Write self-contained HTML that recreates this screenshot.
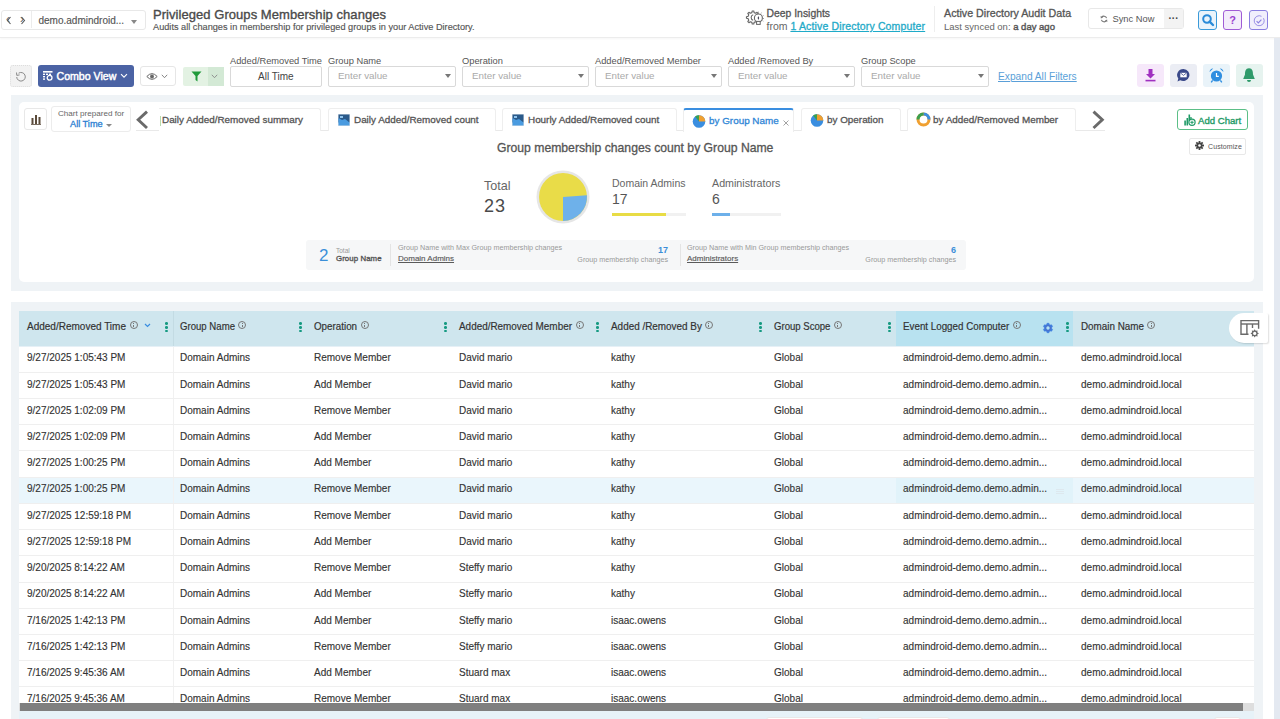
<!DOCTYPE html>
<html><head><meta charset="utf-8">
<style>
*{box-sizing:border-box;margin:0;padding:0}
html,body{width:1280px;height:719px;overflow:hidden;background:#fff;font-family:"Liberation Sans",sans-serif;color:#333}
.a{position:absolute;white-space:nowrap}
.hdr{position:absolute;left:0;top:0;width:1280px;height:38px;background:#fff;border-bottom:1px solid #ececec;box-shadow:0 1px 2px rgba(0,0,0,0.04)}
.strip{position:absolute;left:1274px;top:38px;width:7px;height:681px;background:#e4e9f1}
.panel{position:absolute;background:#eff3f6}
.card{position:absolute;background:#fff;border-radius:5px}
.inp{position:absolute;top:65.5px;height:21px;border:1px solid #d9d9d9;border-radius:2px;background:#fff}
.lbl{position:absolute;top:54.5px;font-size:9.3px;color:#555;line-height:12px}
.ph{position:absolute;left:9px;top:2px;font-size:9.8px;color:#aaa;line-height:13px}
.tri{position:absolute;right:4px;top:7.5px;width:0;height:0;border-left:3px solid transparent;border-right:3px solid transparent;border-top:4.5px solid #777}
.tab{position:absolute;top:108px;height:23px;border:1px solid #eeeeee;border-bottom:none;border-radius:3px 3px 0 0;background:#fff}
.tabt{position:absolute;top:5px;font-size:9.9px;color:#555;line-height:12px;font-weight:400;-webkit-text-stroke:0.3px currentColor}
.th{position:absolute;top:311px;height:34.5px;background:#cfe6ee}
.row{position:absolute;left:19px;width:1235px;height:26.23px;border-bottom:1px solid #efefef;background:#fff}
.c{position:absolute;top:4.8px;font-size:11.5px;color:#333;line-height:12px;-webkit-text-stroke:0.15px currentColor;transform:scaleX(.87);transform-origin:0 0}
.ht{position:absolute;top:320px;font-size:11.5px;color:#333;line-height:12px;-webkit-text-stroke:0.2px currentColor;transform:scaleX(.87);transform-origin:0 0}
.keb{position:absolute;top:322px;width:3px;height:11px}
.keb i{position:absolute;left:-0.3px;width:2.8px;height:2.6px;border-radius:50%;background:#169a82}
.info{position:absolute;top:321px;width:8px;height:8px;border:0.8px solid #777;border-radius:50%}
.info:after{content:"";position:absolute;left:2.6px;top:2.6px;width:1px;height:2.6px;background:#777}
.info:before{content:"";position:absolute;left:2.6px;top:1.1px;width:1px;height:1px;background:#777}
</style></head><body>

<!-- HEADER -->
<div class="hdr"></div>
<div class="a" style="left:1px;top:10px;width:144.5px;height:20px;border:1px solid #e8e8e8;border-radius:3px"></div>
<div class="a" style="left:31px;top:11px;width:1px;height:17px;background:#ececec"></div>
<div class="a" style="left:6px;top:9px;font-size:12px;color:#666;line-height:20px">&#8249;</div>
<div class="a" style="left:20px;top:9px;font-size:12px;color:#666;line-height:20px">&#8250;</div>
<div class="a" style="left:38.5px;top:14px;font-size:10px;color:#555;line-height:13px;-webkit-text-stroke:0.15px #555">demo.admindroid...</div>
<div class="a" style="left:131px;top:19.5px;width:0;height:0;border-left:3.5px solid transparent;border-right:3.5px solid transparent;border-top:4px solid #888"></div>

<div class="a" style="left:153px;top:7px;font-size:13px;color:#4a4a4a;line-height:16px;-webkit-text-stroke:0.35px #4a4a4a;letter-spacing:0.05px">Privileged Groups Membership changes</div>
<div class="a" style="left:153px;top:21.5px;font-size:9.2px;color:#555;line-height:11px;-webkit-text-stroke:0.15px #555">Audits all changes in membership for privileged groups in your Active Directory.</div>

<div class="a" style="left:766.5px;top:7px;font-size:10.4px;color:#555;line-height:13px;-webkit-text-stroke:0.3px #555">Deep Insights</div>
<div class="a" style="left:766.5px;top:20px;font-size:10.5px;color:#666;line-height:13px">from <span style="color:#1eaac8;text-decoration:underline;-webkit-text-stroke:0.3px #1eaac8;letter-spacing:0.15px">1 Active Directory Computer</span></div>
<div class="a" style="left:934px;top:6px;width:1px;height:26px;background:#eee"></div>
<div class="a" style="left:944px;top:7px;font-size:10.7px;color:#555;line-height:13px;-webkit-text-stroke:0.3px #555">Active Directory Audit Data</div>
<div class="a" style="left:944px;top:20px;font-size:9.5px;color:#666;line-height:13px">Last synced on: <span style="color:#555;-webkit-text-stroke:0.4px #555">a day ago</span></div>

<div class="a" style="left:1088px;top:8px;width:96px;height:21px;border:1px solid #e8e8e8;border-radius:3px;background:#fff"></div>
<div class="a" style="left:1164px;top:9px;width:19px;height:19px;background:#f3f3f3"></div>
<div class="a" style="left:1112.5px;top:12.5px;font-size:9.3px;color:#555;line-height:13px">Sync Now</div>
<div class="a" style="left:1168.5px;top:12px;font-size:10px;color:#444;line-height:13px;font-weight:700">&middot;&middot;&middot;</div>

<div class="a" style="left:1198px;top:10px;width:19px;height:20px;border:1px solid #3a9ad9;border-radius:3px;background:#eaf4fb"></div>
<div class="a" style="left:1223px;top:10px;width:19px;height:20px;border:1px solid #a05cd6;border-radius:3px;background:#f3ecfb"></div>
<div class="a" style="left:1249px;top:10px;width:19px;height:20px;border:1px solid #8a7fe0;border-radius:3px;background:#f1effc"></div>

<div class="strip"></div>

<!-- TOOLBAR -->
<div class="a" style="left:10px;top:65px;width:22px;height:22px;border:1px dotted #ddd;border-radius:3px;background:#f2f2f2"></div>
<div class="a" style="left:37.7px;top:65px;width:96.3px;height:21.5px;border-radius:3px;background:#4b63a4"></div>
<div class="a" style="left:56.5px;top:69.5px;font-size:10.6px;color:#fff;line-height:13px;-webkit-text-stroke:0.45px #fff">Combo View</div>
<div class="a" style="left:140px;top:66px;width:36px;height:20px;border:1px solid #e6e6e6;border-radius:3px"></div>
<div class="a" style="left:183px;top:67px;width:41px;height:19px;border-radius:2px;background:#e3f2e3"></div>
<div class="a" style="left:208px;top:67px;width:16px;height:19px;background:#d3e9d5"></div>

<div class="lbl" style="left:230px">Added/Removed Time</div>
<div class="inp" style="left:230px;width:92px"><div class="ph" style="left:27px;top:3.5px;color:#444;font-size:10px">All Time</div></div>
<div class="lbl" style="left:328px">Group Name</div>
<div class="inp" style="left:328px;width:128px"><div class="ph">Enter value</div><div class="tri"></div></div>
<div class="lbl" style="left:462px">Operation</div>
<div class="inp" style="left:462px;width:127px"><div class="ph">Enter value</div><div class="tri"></div></div>
<div class="lbl" style="left:595px">Added/Removed Member</div>
<div class="inp" style="left:595px;width:127px"><div class="ph">Enter value</div><div class="tri"></div></div>
<div class="lbl" style="left:728px">Added /Removed By</div>
<div class="inp" style="left:728px;width:127px"><div class="ph">Enter value</div><div class="tri"></div></div>
<div class="lbl" style="left:861px">Group Scope</div>
<div class="inp" style="left:861px;width:128px"><div class="ph">Enter value</div><div class="tri"></div></div>
<div class="a" style="left:998px;top:70px;font-size:10.2px;color:#5a9fd8;line-height:13px;text-decoration:underline">Expand All Filters</div>

<div class="a" style="left:1137px;top:64px;width:27px;height:23px;border-radius:3px;background:#f6e8fa"></div>
<div class="a" style="left:1170px;top:64px;width:27px;height:23px;border-radius:3px;background:#ebedf4"></div>
<div class="a" style="left:1203px;top:64px;width:27px;height:23px;border-radius:3px;background:#e9f3f9"></div>
<div class="a" style="left:1236px;top:64px;width:27px;height:23px;border-radius:3px;background:#e6f3ef"></div>


<!-- HEADER ICONS -->
<svg class="a" style="left:744px;top:8px" width="22" height="18" viewBox="0 0 22 18"><path d="M13.88 8.41 L15.55 8.71 L15.55 10.29 L13.88 10.59 L13.22 12.18 L14.19 13.57 L13.07 14.69 L11.68 13.72 L10.09 14.38 L9.79 16.05 L8.21 16.05 L7.91 14.38 L6.32 13.72 L4.93 14.69 L3.81 13.57 L4.78 12.18 L4.12 10.59 L2.45 10.29 L2.45 8.71 L4.12 8.41 L4.78 6.82 L3.81 5.43 L4.93 4.31 L6.32 5.28 L7.91 4.62 L8.21 2.95 L9.79 2.95 L10.09 4.62 L11.68 5.28 L13.07 4.31 L14.19 5.43 L13.22 6.82Z" fill="#fff" stroke="#666" stroke-width="1.1" stroke-linejoin="round"/><path d="M9.2 6.8 A2.8 2.8 0 0 0 9.2 12.2" fill="none" stroke="#666" stroke-width="1.1"/><circle cx="14.4" cy="10" r="4" fill="#fff" stroke="#666" stroke-width="1.1"/><rect x="12.6" y="13.4" width="3.6" height="3" fill="#fff" stroke="#666" stroke-width="1"/><path d="M14.4 8 L15.2 10 L14.4 12 L13.6 10Z" fill="#445"/><g stroke="#888" stroke-width="0.8"><line x1="14.4" y1="3.6" x2="14.4" y2="4.8"/><line x1="17.5" y1="4.6" x2="17" y2="5.5"/><line x1="19.6" y1="7.5" x2="18.6" y2="8"/><line x1="20" y1="10.5" x2="19" y2="10.5"/><line x1="19.4" y1="13.2" x2="18.5" y2="12.6"/></g></svg>
<svg class="a" style="left:1100px;top:14.5px" width="8" height="8" viewBox="0 0 8 8"><g fill="none" stroke="#777" stroke-width="1.1"><path d="M6.6 3.2 A2.8 2.8 0 0 0 1.6 2.4"/><path d="M1.4 4.8 A2.8 2.8 0 0 0 6.4 5.6"/></g><path d="M0.6 0.9 L0.9 3.4 L3 2.6Z" fill="#777"/><path d="M7.4 7.1 L7.1 4.6 L5 5.4Z" fill="#777"/></svg>
<svg class="a" style="left:1201px;top:13px" width="14" height="14" viewBox="0 0 14 14"><circle cx="6" cy="6" r="3.8" fill="none" stroke="#2a8bd8" stroke-width="2"/><path d="M8.6 8.6 L12 12" stroke="#2a8bd8" stroke-width="2.4" stroke-linecap="round"/></svg>
<div class="a" style="left:1223px;top:11.5px;width:19px;text-align:center;font-size:11px;font-weight:700;color:#9a3fd0;line-height:17px">?</div>
<svg class="a" style="left:1251.5px;top:13.5px" width="14" height="14" viewBox="0 0 14 14"><path d="M11.5 4.2 A5 5 0 1 1 9.5 2.3" fill="none" stroke="#9a90e6" stroke-width="1"/><path d="M4.6 7.2 L6.3 8.9 L9.4 5.6" fill="none" stroke="#8a7fe0" stroke-width="1.1"/></svg>
<svg class="a" style="left:5.5px;top:15.5px" width="6" height="9" viewBox="0 0 6 9"><path d="M4.5 1 L1.5 4.5 L4.5 8" fill="none" stroke="#555" stroke-width="1.1"/></svg>
<svg class="a" style="left:20px;top:15.5px" width="6" height="9" viewBox="0 0 6 9"><path d="M1.5 1 L4.5 4.5 L1.5 8" fill="none" stroke="#555" stroke-width="1.1"/></svg>
<!-- TOOLBAR ICONS -->
<svg class="a" style="left:15px;top:70.5px" width="12" height="12" viewBox="0 0 12 12"><path d="M3.6 2.2 A4.3 4.3 0 1 1 1.7 6" fill="none" stroke="#8a8a8a" stroke-width="1"/><path d="M1.5 1.5 L1.8 4.4 L4.6 3.9" fill="none" stroke="#8a8a8a" stroke-width="1"/></svg>
<svg class="a" style="left:43px;top:70.5px" width="10" height="10" viewBox="0 0 10 10"><g fill="#fff"><rect x="0" y="0" width="9.5" height="1.6"/><rect x="0" y="2.6" width="2" height="1.4"/><rect x="3" y="2.6" width="2" height="1.4"/><rect x="6" y="2.6" width="2" height="1.4"/><rect x="0" y="5" width="2" height="1.4"/><rect x="0" y="7.4" width="2" height="1.4"/></g><circle cx="6.6" cy="6.8" r="2.4" fill="none" stroke="#fff" stroke-width="1.3"/></svg>
<svg class="a" style="left:120px;top:73px" width="8" height="6" viewBox="0 0 8 6"><path d="M1 1.2 L4 4.2 L7 1.2" fill="none" stroke="#fff" stroke-width="1.1"/></svg>
<svg class="a" style="left:146px;top:71.5px" width="12" height="9" viewBox="0 0 12 9"><path d="M0.8 4.5 Q6 -1.2 11.2 4.5 Q6 10.2 0.8 4.5Z" fill="none" stroke="#666" stroke-width="1"/><circle cx="6" cy="4.5" r="1.9" fill="#666"/></svg>
<svg class="a" style="left:161px;top:74px" width="7" height="5" viewBox="0 0 7 5"><path d="M0.8 0.8 L3.5 3.7 L6.2 0.8" fill="none" stroke="#777" stroke-width="0.9"/></svg>
<svg class="a" style="left:191px;top:71px" width="11" height="11" viewBox="0 0 11 11"><path d="M0.5 0.5 H10.5 L6.5 5 V10.5 L4.5 9 V5Z" fill="#1f9a3a"/></svg>
<svg class="a" style="left:211px;top:74px" width="7" height="5" viewBox="0 0 7 5"><path d="M0.8 0.8 L3.5 3.7 L6.2 0.8" fill="none" stroke="#888" stroke-width="0.9"/></svg>
<svg class="a" style="left:1144px;top:68px" width="13" height="14" viewBox="0 0 13 14"><path d="M4.5 1 H8.5 V6 H11 L6.5 10.5 L2 6 H4.5Z" fill="#a030c0"/><rect x="1.5" y="11.8" width="10" height="1.6" fill="#a030c0"/></svg>
<svg class="a" style="left:1176px;top:68px" width="15" height="15" viewBox="0 0 15 15"><path d="M7.5 1 A6.3 6 0 1 1 4.2 12.3 L1.5 13.5 L2.3 10.5 A6.3 6 0 0 1 7.5 1Z" fill="#3b4a8a"/><rect x="4.3" y="4.8" width="6.4" height="4.5" fill="#fff"/><path d="M4.3 4.8 L7.5 7.4 L10.7 4.8" fill="none" stroke="#3b4a8a" stroke-width="0.8"/></svg>
<svg class="a" style="left:1209px;top:68px" width="15" height="15" viewBox="0 0 15 15"><circle cx="7.5" cy="8" r="5.6" fill="#2f8ee0"/><path d="M7.5 5 V8.3 H9.8" fill="none" stroke="#fff" stroke-width="1.2"/><path d="M0.6 4 A3.2 3.2 0 0 1 4.2 0.6Z M14.4 4 A3.2 3.2 0 0 0 10.8 0.6Z" fill="#2f8ee0"/><path d="M3.6 12.3 L2.2 14.3 M11.4 12.3 L12.8 14.3" stroke="#2f8ee0" stroke-width="1.4"/></svg>
<svg class="a" style="left:1242px;top:67px" width="14" height="16" viewBox="0 0 14 16"><path d="M7 1.2 C10.5 1.2 11 4.5 11 7.5 L12.8 12 H1.2 L3 7.5 C3 4.5 3.5 1.2 7 1.2Z" fill="#2e9a6a"/><path d="M5 13 A2 2 0 0 0 9 13Z" fill="#2e9a6a"/></svg>

<!-- CHART PANEL -->
<div class="panel" style="left:11px;top:95px;width:1252px;height:196px"></div>
<div class="card" style="left:19px;top:102px;width:1235px;height:180px"></div>

<div class="a" style="left:24px;top:108px;width:23px;height:22px;border:1px solid #e8e8e8;border-radius:3px"></div>
<div class="a" style="left:51px;top:106px;width:80px;height:26px;border:1px solid #ececec;border-radius:3px"></div>
<div class="a" style="left:58px;top:109px;font-size:8.1px;color:#666;line-height:10px">Chart prepared for</div>
<div class="a" style="left:70px;top:118px;font-size:9.2px;color:#2a80d2;line-height:12px;-webkit-text-stroke:0.3px #2a80d2">All Time</div>

<div class="a" style="left:136px;top:130px;width:969px;height:1px;background:#e9e9e9"></div>
<div class="tab" style="left:159px;width:162px;border-left:none;border-radius:0 3px 0 0"><div class="tabt" style="left:3px">Daily Added/Removed summary</div></div>
<div class="tab" style="left:328px;width:168px"><div class="tabt" style="left:25px">Daily Added/Removed count</div></div>
<div class="tab" style="left:502px;width:175px"><div class="tabt" style="left:25px">Hourly Added/Removed count</div></div>
<div class="tab" style="left:683px;width:111px;height:24px;border-top:2px solid #3a8ee0"><div class="tabt" style="left:25px;top:5px;color:#2f86d6">by Group Name</div></div>
<div class="tab" style="left:801px;width:100px"><div class="tabt" style="left:25px">by Operation</div></div>
<div class="tab" style="left:907px;width:169px"><div class="tabt" style="left:25px">by Added/Removed Member</div></div>

<div class="a" style="left:1177px;top:109px;width:71px;height:21px;border:1px solid #5cbf87;border-radius:3px"></div>
<div class="a" style="left:1198px;top:114.5px;font-size:9.6px;color:#1f9a66;line-height:12px;-webkit-text-stroke:0.35px #1f9a66">Add Chart</div>
<div class="a" style="left:1189px;top:138px;width:57px;height:17px;border:1px solid #e8e8e8;border-radius:2px"></div>
<div class="a" style="left:1208px;top:142px;font-size:7px;color:#555;line-height:9px;letter-spacing:0.1px">Customize</div>

<div class="a" style="left:497px;top:141px;font-size:12.2px;color:#555;line-height:15px;-webkit-text-stroke:0.3px #555">Group membership changes count by Group Name</div>
<div class="a" style="left:484px;top:179px;font-size:12.6px;color:#666;line-height:15px">Total</div>
<div class="a" style="left:484px;top:196px;font-size:18px;color:#4a4a4a;line-height:21px;letter-spacing:1px">23</div>
<div class="a" style="left:612px;top:177px;font-size:10.5px;color:#666;line-height:13px">Domain Admins</div>
<div class="a" style="left:612px;top:191px;font-size:14px;color:#555;line-height:17px">17</div>
<div class="a" style="left:612px;top:213px;width:74px;height:3px;background:#f1f1f1"></div>
<div class="a" style="left:612px;top:213px;width:54px;height:3px;background:#e8dc45"></div>
<div class="a" style="left:712px;top:177px;font-size:10.7px;color:#666;line-height:13px">Administrators</div>
<div class="a" style="left:712px;top:191px;font-size:14px;color:#555;line-height:17px">6</div>
<div class="a" style="left:712px;top:213px;width:69px;height:3px;background:#f1f1f1"></div>
<div class="a" style="left:712px;top:213px;width:18px;height:3px;background:#6db0ea"></div>

<div class="a" style="left:306px;top:240px;width:660px;height:30px;background:#f6f7f8;border-radius:3px"></div>


<!-- PIE -->
<svg class="a" style="left:535px;top:169px" width="56" height="56" viewBox="0 0 56 56">
<circle cx="28" cy="28" r="26.5" fill="#e6e6e6"/>
<circle cx="28" cy="28" r="24" fill="#e9dc48"/>
<path d="M28 28 L51.95 26.3 A24 24 0 0 1 28 52 Z" fill="#6eb1ea"/>
</svg>
<!-- SUMMARY -->
<div class="a" style="left:319px;top:245px;font-size:17px;color:#3b8fd8;line-height:22px">2</div>
<div class="a" style="left:336px;top:247px;font-size:6.5px;color:#999;line-height:8px">Total</div>
<div class="a" style="left:336px;top:254px;font-size:7.8px;color:#555;line-height:10px;-webkit-text-stroke:0.35px #555;letter-spacing:0.1px">Group Name</div>
<div class="a" style="left:390px;top:244px;width:1px;height:22px;background:#e4e4e4"></div>
<div class="a" style="left:398px;top:243px;font-size:7.2px;color:#999;line-height:9px">Group Name with Max Group membership changes</div>
<div class="a" style="left:398px;top:254px;font-size:8px;color:#5a5a5a;-webkit-text-stroke:0.15px #5a5a5a;line-height:10px;text-decoration:underline">Domain Admins</div>
<div class="a" style="left:600px;top:245px;width:68px;text-align:right;font-size:9px;color:#3b8fd8;line-height:11px;font-weight:700">17</div>
<div class="a" style="left:560px;top:255px;width:108px;text-align:right;font-size:7.2px;color:#999;line-height:9px">Group membership changes</div>
<div class="a" style="left:680px;top:244px;width:1px;height:22px;background:#e4e4e4"></div>
<div class="a" style="left:687px;top:243px;font-size:7.2px;color:#999;line-height:9px">Group Name with Min Group membership changes</div>
<div class="a" style="left:687px;top:254px;font-size:8px;color:#5a5a5a;-webkit-text-stroke:0.15px #5a5a5a;line-height:10px;text-decoration:underline">Administrators</div>
<div class="a" style="left:888px;top:245px;width:68px;text-align:right;font-size:9px;color:#3b8fd8;line-height:11px;font-weight:700">6</div>
<div class="a" style="left:848px;top:255px;width:108px;text-align:right;font-size:7.2px;color:#999;line-height:9px">Group membership changes</div>
<!-- TAB ARROWS -->
<svg class="a" style="left:135px;top:109px" width="15" height="22" viewBox="0 0 15 22"><path d="M12 2.6 L3.2 10.8 L12 19" fill="none" stroke="#6a6a6a" stroke-width="2.9"/></svg>
<svg class="a" style="left:1090px;top:109px" width="16" height="22" viewBox="0 0 16 22"><path d="M3.5 2.6 L12.3 10.8 L3.5 19" fill="none" stroke="#6a6a6a" stroke-width="2.9"/></svg>
<!-- TAB ICONS -->
<svg class="a" style="left:338px;top:114px" width="12" height="12" viewBox="0 0 12 12"><rect width="12" height="12" fill="#d8e0e8"/><rect x="0.5" y="0.5" width="11" height="8" fill="#2a5a8a"/><path d="M0.5 4 L4 6 L7 5 L11.5 8.5 L11.5 11.5 L0.5 11.5Z" fill="#4a9be0"/><rect x="2" y="2" width="3" height="2" fill="#8fc4ee"/></svg>
<svg class="a" style="left:512px;top:114px" width="12" height="12" viewBox="0 0 12 12"><rect width="12" height="12" fill="#d8e0e8"/><rect x="0.5" y="0.5" width="11" height="8" fill="#2a5a8a"/><path d="M0.5 4 L4 6 L7 5 L11.5 8.5 L11.5 11.5 L0.5 11.5Z" fill="#4a9be0"/><rect x="2" y="2" width="3" height="2" fill="#8fc4ee"/></svg>
<svg class="a" style="left:692px;top:114px" width="14" height="14" viewBox="0 0 14 14"><circle cx="7" cy="7.5" r="6.3" fill="#3a8ee0"/><path d="M7 7.5 L7 1.2 A6.3 6.3 0 0 1 13.3 7.5Z" fill="#f0a030"/><path d="M7 7.5 L3 2.6 A6.3 6.3 0 0 1 7 1.2Z" fill="#3aa050"/></svg>
<svg class="a" style="left:782.5px;top:120px" width="6" height="6" viewBox="0 0 6 6"><path d="M0.5 0.5 L5.5 5.5 M5.5 0.5 L0.5 5.5" stroke="#999" stroke-width="0.9"/></svg>
<svg class="a" style="left:810px;top:113px" width="14" height="14" viewBox="0 0 14 14"><circle cx="7" cy="7.5" r="6.3" fill="#3a8ee0"/><path d="M7 7.5 L7 1.2 A6.3 6.3 0 0 1 13.3 7.5Z" fill="#f0a030"/><path d="M7 7.5 L3 2.6 A6.3 6.3 0 0 1 7 1.2Z" fill="#3aa050"/></svg>
<svg class="a" style="left:916px;top:112px" width="15" height="15" viewBox="0 0 15 15"><circle cx="7.5" cy="7.5" r="5.5" fill="none" stroke="#f0a030" stroke-width="3"/><path d="M7.5 2 A5.5 5.5 0 0 1 13 7.5" fill="none" stroke="#3a8ee0" stroke-width="3"/><path d="M2 7.5 A5.5 5.5 0 0 1 7.5 2" fill="none" stroke="#3aa050" stroke-width="3"/></svg>
<div class="a" style="left:159.5px;top:116px;width:1px;height:10px;background:#b8dcae"></div>
<!-- CHART BTN ICON -->
<svg class="a" style="left:30px;top:113px" width="12" height="12" viewBox="0 0 12 12"><g fill="#5a4a3a"><rect x="1.5" y="5" width="2" height="6"/><rect x="5" y="2" width="2" height="9"/><rect x="8.5" y="4" width="2" height="7"/><rect x="1" y="11" width="10" height="0.8"/></g></svg>
<div class="a" style="left:106px;top:124px;width:0;height:0;border-left:3px solid transparent;border-right:3px solid transparent;border-top:3px solid #888"></div>
<!-- ADD CHART ICON -->
<svg class="a" style="left:1183.5px;top:113.5px" width="12" height="12" viewBox="0 0 12 12"><g fill="#1f9a66"><rect x="0.3" y="6.5" width="1.6" height="5"/><rect x="2.5" y="4" width="1.6" height="7.5"/><rect x="4.5" y="0.5" width="1.6" height="6"/><rect x="6.3" y="3" width="1.3" height="2"/></g><circle cx="8" cy="8.3" r="3.1" fill="#fff" stroke="#1f9a66" stroke-width="1.2"/><path d="M8 6.6 V10 M6.3 8.3 H9.7" stroke="#1f9a66" stroke-width="1"/></svg>
<svg class="a" style="left:1195px;top:141px" width="9" height="9" viewBox="0 0 10 10"><g fill="#444"><circle cx="5" cy="5" r="3.3"/><rect x="4" y="0" width="2" height="10"/><rect x="0" y="4" width="10" height="2"/><rect x="4" y="0" width="2" height="10" transform="rotate(45 5 5)"/><rect x="4" y="0" width="2" height="10" transform="rotate(-45 5 5)"/></g><circle cx="5" cy="5" r="1.4" fill="#fff"/></svg>

<!-- TABLE PANEL -->
<div class="panel" style="left:11px;top:302px;width:1252px;height:417px"></div>
<div class="a" style="left:19px;top:311px;width:1235px;height:408px;background:#e6f0f6"></div>
<div class="th" style="left:19px;width:877px"></div>
<div class="th" style="left:896px;width:177px;background:#b8e2f0"></div>
<div class="th" style="left:1073px;width:181px"></div>

<div class="row" style="top:346.50px;background:#fff"><div class="c" style="left:8px">9/27/2025 1:05:43 PM</div><div class="c" style="left:161px">Domain Admins</div><div class="c" style="left:295px">Remove Member</div><div class="c" style="left:440px">David mario</div><div class="c" style="left:592px">kathy</div><div class="c" style="left:755px">Global</div><div class="c" style="left:884px">admindroid-demo.demo.admin...</div><div class="c" style="left:1062px">demo.admindroid.local</div><div style="position:absolute;left:153.5px;top:0;width:1px;height:100%;background:#f1f1f1"></div></div>
<div class="row" style="top:372.73px;background:#fff"><div class="c" style="left:8px">9/27/2025 1:05:43 PM</div><div class="c" style="left:161px">Domain Admins</div><div class="c" style="left:295px">Add Member</div><div class="c" style="left:440px">David mario</div><div class="c" style="left:592px">kathy</div><div class="c" style="left:755px">Global</div><div class="c" style="left:884px">admindroid-demo.demo.admin...</div><div class="c" style="left:1062px">demo.admindroid.local</div><div style="position:absolute;left:153.5px;top:0;width:1px;height:100%;background:#f1f1f1"></div></div>
<div class="row" style="top:398.96px;background:#fff"><div class="c" style="left:8px">9/27/2025 1:02:09 PM</div><div class="c" style="left:161px">Domain Admins</div><div class="c" style="left:295px">Remove Member</div><div class="c" style="left:440px">David mario</div><div class="c" style="left:592px">kathy</div><div class="c" style="left:755px">Global</div><div class="c" style="left:884px">admindroid-demo.demo.admin...</div><div class="c" style="left:1062px">demo.admindroid.local</div><div style="position:absolute;left:153.5px;top:0;width:1px;height:100%;background:#f1f1f1"></div></div>
<div class="row" style="top:425.19px;background:#fff"><div class="c" style="left:8px">9/27/2025 1:02:09 PM</div><div class="c" style="left:161px">Domain Admins</div><div class="c" style="left:295px">Add Member</div><div class="c" style="left:440px">David mario</div><div class="c" style="left:592px">kathy</div><div class="c" style="left:755px">Global</div><div class="c" style="left:884px">admindroid-demo.demo.admin...</div><div class="c" style="left:1062px">demo.admindroid.local</div><div style="position:absolute;left:153.5px;top:0;width:1px;height:100%;background:#f1f1f1"></div></div>
<div class="row" style="top:451.42px;background:#fff"><div class="c" style="left:8px">9/27/2025 1:00:25 PM</div><div class="c" style="left:161px">Domain Admins</div><div class="c" style="left:295px">Add Member</div><div class="c" style="left:440px">David mario</div><div class="c" style="left:592px">kathy</div><div class="c" style="left:755px">Global</div><div class="c" style="left:884px">admindroid-demo.demo.admin...</div><div class="c" style="left:1062px">demo.admindroid.local</div><div style="position:absolute;left:153.5px;top:0;width:1px;height:100%;background:#f1f1f1"></div></div>
<div class="row" style="top:477.65px;background:#eaf6fc"><div style="position:absolute;left:877px;top:0;width:177px;height:100%;background:#e1f3fa"></div><div style="position:absolute;left:1037px;top:11px;width:8px;height:1px;background:#dde8ee;box-shadow:0 2px 0 #dde8ee,0 4px 0 #dde8ee"></div><div class="c" style="left:8px">9/27/2025 1:00:25 PM</div><div class="c" style="left:161px">Domain Admins</div><div class="c" style="left:295px">Remove Member</div><div class="c" style="left:440px">David mario</div><div class="c" style="left:592px">kathy</div><div class="c" style="left:755px">Global</div><div class="c" style="left:884px">admindroid-demo.demo.admin...</div><div class="c" style="left:1062px">demo.admindroid.local</div><div style="position:absolute;left:153.5px;top:0;width:1px;height:100%;background:#f1f1f1"></div></div>
<div class="row" style="top:503.88px;background:#fff"><div class="c" style="left:8px">9/27/2025 12:59:18 PM</div><div class="c" style="left:161px">Domain Admins</div><div class="c" style="left:295px">Remove Member</div><div class="c" style="left:440px">David mario</div><div class="c" style="left:592px">kathy</div><div class="c" style="left:755px">Global</div><div class="c" style="left:884px">admindroid-demo.demo.admin...</div><div class="c" style="left:1062px">demo.admindroid.local</div><div style="position:absolute;left:153.5px;top:0;width:1px;height:100%;background:#f1f1f1"></div></div>
<div class="row" style="top:530.11px;background:#fff"><div class="c" style="left:8px">9/27/2025 12:59:18 PM</div><div class="c" style="left:161px">Domain Admins</div><div class="c" style="left:295px">Add Member</div><div class="c" style="left:440px">David mario</div><div class="c" style="left:592px">kathy</div><div class="c" style="left:755px">Global</div><div class="c" style="left:884px">admindroid-demo.demo.admin...</div><div class="c" style="left:1062px">demo.admindroid.local</div><div style="position:absolute;left:153.5px;top:0;width:1px;height:100%;background:#f1f1f1"></div></div>
<div class="row" style="top:556.34px;background:#fff"><div class="c" style="left:8px">9/20/2025 8:14:22 AM</div><div class="c" style="left:161px">Domain Admins</div><div class="c" style="left:295px">Remove Member</div><div class="c" style="left:440px">Steffy mario</div><div class="c" style="left:592px">kathy</div><div class="c" style="left:755px">Global</div><div class="c" style="left:884px">admindroid-demo.demo.admin...</div><div class="c" style="left:1062px">demo.admindroid.local</div><div style="position:absolute;left:153.5px;top:0;width:1px;height:100%;background:#f1f1f1"></div></div>
<div class="row" style="top:582.57px;background:#fff"><div class="c" style="left:8px">9/20/2025 8:14:22 AM</div><div class="c" style="left:161px">Domain Admins</div><div class="c" style="left:295px">Add Member</div><div class="c" style="left:440px">Steffy mario</div><div class="c" style="left:592px">kathy</div><div class="c" style="left:755px">Global</div><div class="c" style="left:884px">admindroid-demo.demo.admin...</div><div class="c" style="left:1062px">demo.admindroid.local</div><div style="position:absolute;left:153.5px;top:0;width:1px;height:100%;background:#f1f1f1"></div></div>
<div class="row" style="top:608.80px;background:#fff"><div class="c" style="left:8px">7/16/2025 1:42:13 PM</div><div class="c" style="left:161px">Domain Admins</div><div class="c" style="left:295px">Add Member</div><div class="c" style="left:440px">Steffy mario</div><div class="c" style="left:592px">isaac.owens</div><div class="c" style="left:755px">Global</div><div class="c" style="left:884px">admindroid-demo.demo.admin...</div><div class="c" style="left:1062px">demo.admindroid.local</div><div style="position:absolute;left:153.5px;top:0;width:1px;height:100%;background:#f1f1f1"></div></div>
<div class="row" style="top:635.03px;background:#fff"><div class="c" style="left:8px">7/16/2025 1:42:13 PM</div><div class="c" style="left:161px">Domain Admins</div><div class="c" style="left:295px">Remove Member</div><div class="c" style="left:440px">Steffy mario</div><div class="c" style="left:592px">isaac.owens</div><div class="c" style="left:755px">Global</div><div class="c" style="left:884px">admindroid-demo.demo.admin...</div><div class="c" style="left:1062px">demo.admindroid.local</div><div style="position:absolute;left:153.5px;top:0;width:1px;height:100%;background:#f1f1f1"></div></div>
<div class="row" style="top:661.26px;background:#fff"><div class="c" style="left:8px">7/16/2025 9:45:36 AM</div><div class="c" style="left:161px">Domain Admins</div><div class="c" style="left:295px">Add Member</div><div class="c" style="left:440px">Stuard max</div><div class="c" style="left:592px">isaac.owens</div><div class="c" style="left:755px">Global</div><div class="c" style="left:884px">admindroid-demo.demo.admin...</div><div class="c" style="left:1062px">demo.admindroid.local</div><div style="position:absolute;left:153.5px;top:0;width:1px;height:100%;background:#f1f1f1"></div></div>
<div class="row" style="top:687.49px;background:#fff"><div class="c" style="left:8px">7/16/2025 9:45:36 AM</div><div class="c" style="left:161px">Domain Admins</div><div class="c" style="left:295px">Remove Member</div><div class="c" style="left:440px">Stuard max</div><div class="c" style="left:592px">isaac.owens</div><div class="c" style="left:755px">Global</div><div class="c" style="left:884px">admindroid-demo.demo.admin...</div><div class="c" style="left:1062px">demo.admindroid.local</div><div style="position:absolute;left:153.5px;top:0;width:1px;height:100%;background:#f1f1f1"></div></div>
<!-- TABLE HEADER TEXT -->
<div class="ht" style="left:27px">Added/Removed Time</div>
<div class="info" style="left:129.5px"></div>
<svg class="a" style="left:144px;top:323px" width="7" height="5" viewBox="0 0 7 5"><path d="M1 1 L3.5 3.5 L6 1" fill="none" stroke="#3a8ee0" stroke-width="1.2"/></svg>
<div class="keb" style="left:165px"><i style="top:0.3px"></i><i style="top:4px"></i><i style="top:7.8px"></i></div>
<div class="a" style="left:173px;top:311px;width:1px;height:35px;background:#c3dbe3"></div>
<div class="ht" style="left:180px;transform:scaleX(0.835)">Group Name</div>
<div class="info" style="left:238px"></div>
<div class="keb" style="left:299px"><i style="top:0.3px"></i><i style="top:4px"></i><i style="top:7.8px"></i></div>
<div class="ht" style="left:314px;transform:scaleX(0.852)">Operation</div>
<div class="info" style="left:360.5px"></div>
<div class="keb" style="left:444px"><i style="top:0.3px"></i><i style="top:4px"></i><i style="top:7.8px"></i></div>
<div class="ht" style="left:459px;transform:scaleX(0.862)">Added/Removed Member</div>
<div class="info" style="left:575.5px"></div>
<div class="keb" style="left:596px"><i style="top:0.3px"></i><i style="top:4px"></i><i style="top:7.8px"></i></div>
<div class="ht" style="left:611px;transform:scaleX(0.862)">Added /Removed By</div>
<div class="info" style="left:704.5px"></div>
<div class="keb" style="left:759px"><i style="top:0.3px"></i><i style="top:4px"></i><i style="top:7.8px"></i></div>
<div class="ht" style="left:774px;transform:scaleX(0.833)">Group Scope</div>
<div class="info" style="left:833.75px"></div>
<div class="keb" style="left:888px"><i style="top:0.3px"></i><i style="top:4px"></i><i style="top:7.8px"></i></div>
<div class="ht" style="left:903px;transform:scaleX(0.852)">Event Logged Computer</div>
<div class="info" style="left:1012.8px"></div>
<svg class="a" style="left:1041.6px;top:321.6px" width="12" height="12" viewBox="0 0 12 12"><path d="M4.53 2.71 L5.05 1.30 L6.95 1.30 L7.47 2.71 L8.11 3.09 L9.60 2.82 L10.55 4.47 L9.58 5.63 L9.58 6.37 L10.55 7.53 L9.60 9.18 L8.11 8.91 L7.47 9.29 L6.95 10.70 L5.05 10.70 L4.53 9.29 L3.89 8.91 L2.40 9.18 L1.45 7.53 L2.42 6.37 L2.42 5.63 L1.45 4.47 L2.40 2.82 L3.89 3.09Z" fill="#3f7ede" stroke="#3f7ede" stroke-width="0.6" stroke-linejoin="round"/><circle cx="6" cy="6" r="1.7" fill="#b8e2f0"/><circle cx="6" cy="6" r="2.6" fill="none" stroke="#5a64b8" stroke-width="0.5"/></svg>
<div class="keb" style="left:1066px"><i style="top:0.3px"></i><i style="top:4px"></i><i style="top:7.8px"></i></div>
<div class="ht" style="left:1081px;transform:scaleX(0.856)">Domain Name</div>
<div class="info" style="left:1147.2px"></div>
<div class="a" style="left:1229px;top:313px;width:39px;height:30px;background:#fff;border-radius:15px 2px 2px 15px;box-shadow:1px 1px 1.5px rgba(0,0,0,0.13)"></div>
<svg class="a" style="left:1239px;top:319px" width="22" height="20" viewBox="0 0 22 20"><g fill="none" stroke="#6a6a6a" stroke-width="1.4"><path d="M9.5 15.3 H2 V1.6 H19.6 V9.7"/><line x1="2" y1="5" x2="19.6" y2="5"/><line x1="7.9" y1="5" x2="7.9" y2="15.3"/><line x1="13.5" y1="5" x2="13.5" y2="9"/></g><g transform="translate(15.7 14.4)"><path d="M0 -4.2 L1 -2.6 L2.9 -3 L2.6 -1.2 L4.2 0 L2.6 1.2 L2.9 3 L1 2.6 L0 4.2 L-1 2.6 L-2.9 3 L-2.6 1.2 L-4.2 0 L-2.6 -1.2 L-2.9 -3 L-1 -2.6Z" fill="#6a6a6a"/><circle r="1.6" fill="#fff"/></g></svg>


<div class="a" style="left:19px;top:710.5px;width:1235px;height:9px;background:#e7f2f8"></div>
<div class="a" style="left:19px;top:703px;width:1235px;height:7.5px;background:#dedede"></div>
<div class="a" style="left:20px;top:703px;width:1223px;height:7.5px;background:#7f7f7f"></div>
<div class="a" style="left:766px;top:716.5px;width:97px;height:6px;background:#fff;border-radius:3px;border:1px solid #e8e8e8"></div>
<div class="a" style="left:877px;top:716.5px;width:73px;height:6px;background:#fff;border-radius:3px;border:1px solid #e8e8e8"></div>
<div class="a" style="left:1214px;top:716.5px;width:27px;height:6px;background:#fff;border-radius:3px;border:1px solid #e8e8e8"></div>

</body></html>
